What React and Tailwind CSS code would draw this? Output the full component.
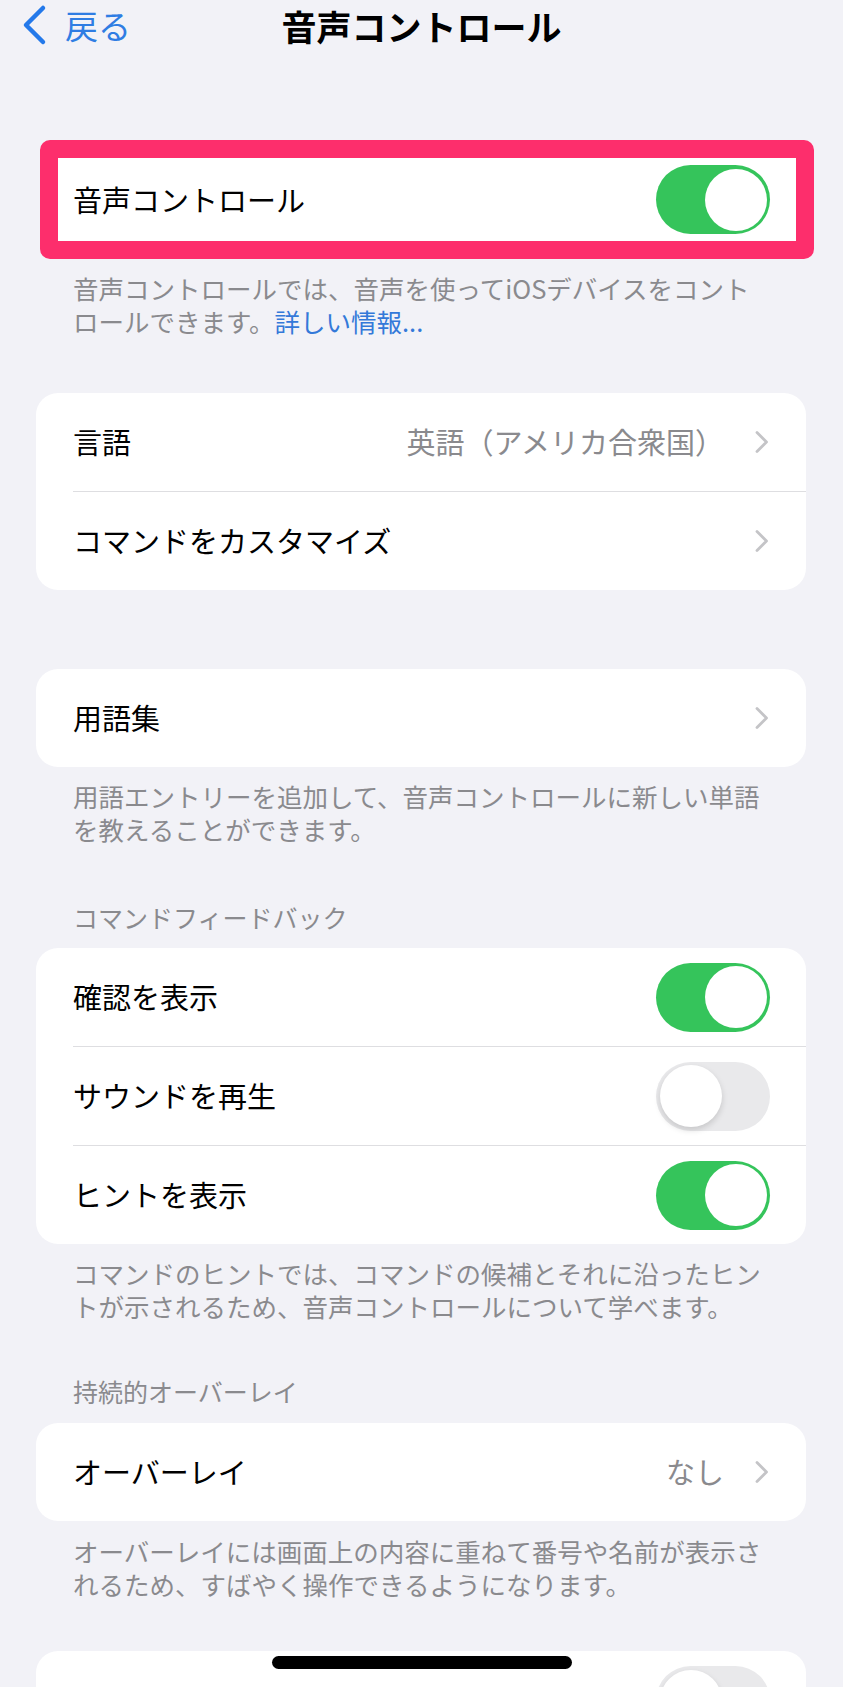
const font = { fontFamily: '"Noto Sans CJK JP", "Noto Sans", sans-serif' };

const Chevron = () => (
  <svg width="16" height="24" viewBox="0 0 16 24" className="shrink-0">
    <path
      d="M3 2.5 L12.5 12 L3 21.5"
      fill="none"
      stroke="#c4c4c7"
      strokeWidth="2.8"
      strokeLinecap="round"
      strokeLinejoin="round"
    />
  </svg>
);

const Toggle = ({ on }) => (
  <div
    className={`relative w-[114px] h-[69px] rounded-full shrink-0 ${
      on ? "bg-[#35c45b]" : "bg-[#e9e9eb]"
    }`}
  >
    <span
      className={`absolute top-[3.5px] w-[62px] h-[62px] rounded-full bg-white ${
        on ? "right-[3.5px]" : "left-[3.5px] shadow-[0_3px_6px_rgba(0,0,0,0.15)]"
      }`}
    ></span>
  </div>
);

const Row = ({ label, value, chevron, toggle, last }) => (
  <div className="pl-[37px]">
    <div
      className={`flex items-center justify-between pr-[36px] ${
        last ? "h-[98px]" : "h-[99px] border-b border-[#dedee1]"
      }`}
    >
      <span className="text-[29px] text-black">{label}</span>
      <div className="flex items-center gap-[30px]">
        {value && <span className="text-[29px] text-[#8a8a8e]">{value}</span>}
        {chevron && <Chevron />}
        {toggle !== undefined && <Toggle on={toggle} />}
      </div>
    </div>
  </div>
);

const Card = ({ className = "", children }) => (
  <div className={`ml-[36px] mr-[37px] bg-white rounded-[22px] overflow-hidden ${className}`}>
    {children}
  </div>
);

const Footer = ({ className = "", children }) => (
  <p className={`ml-[73px] text-[25.5px] leading-[33px] text-[#8a8a8e] whitespace-nowrap ${className}`}>
    {children}
  </p>
);

const SectionTitle = ({ className = "", children }) => (
  <p className={`ml-[73px] text-[25px] leading-[32px] text-[#8a8a8e] ${className}`}>
    {children}
  </p>
);

export default function App() {
  return (
    <div className="relative w-[843px] h-[1687px] overflow-hidden bg-[#f2f2f7]" style={font}>
      {/* header */}
      <div className="relative h-[50px] flex items-center">
        <div className="flex items-center pl-[20px] gap-[17px] text-[#2f7de3]">
          <svg width="28" height="42" viewBox="0 0 28 42">
            <path
              d="M23 4 L6 21 L23 38"
              fill="none"
              stroke="#2479ea"
              strokeWidth="4.5"
              strokeLinecap="round"
              strokeLinejoin="round"
            />
          </svg>
          <span className="text-[33px] leading-none">戻る</span>
        </div>
        <h1 className="absolute left-0 right-0 text-center text-[35px] font-bold text-black leading-none">
          音声コントロール
        </h1>
      </div>

      {/* highlighted voice control */}
      <div className="mt-[90px] ml-[40px] mr-[29px] border-[18px] border-[#fd2e6c] rounded-[10px] bg-white">
        <div className="h-[83px] flex items-center justify-between pl-[15px] pr-[26px]">
          <span className="text-[29px] text-black">音声コントロール</span>
          <Toggle on />
        </div>
      </div>
      <Footer className="mt-[12px]">
        音声コントロールでは、音声を使ってiOSデバイスをコント
        <br />
        ロールできます。<span className="text-[#3479d9]">詳しい情報...</span>
      </Footer>

      <Card className="mt-[56px]">
        <Row label="言語" value="英語（アメリカ合衆国）" chevron />
        <Row label="コマンドをカスタマイズ" chevron last />
      </Card>

      <Card className="mt-[79px]">
        <Row label="用語集" chevron last />
      </Card>
      <Footer className="mt-[12px]">
        用語エントリーを追加して、音声コントロールに新しい単語
        <br />
        を教えることができます。
      </Footer>

      <SectionTitle className="mt-[56px]">コマンドフィードバック</SectionTitle>
      <Card className="mt-[15px]">
        <Row label="確認を表示" toggle={true} />
        <Row label="サウンドを再生" toggle={false} />
        <Row label="ヒントを表示" toggle={true} last />
      </Card>
      <Footer className="mt-[12px]">
        コマンドのヒントでは、コマンドの候補とそれに沿ったヒン
        <br />
        トが示されるため、音声コントロールについて学べます。
      </Footer>

      <SectionTitle className="mt-[53px]">持続的オーバーレイ</SectionTitle>
      <Card className="mt-[16px]">
        <Row label="オーバーレイ" value="なし" chevron last />
      </Card>
      <Footer className="mt-[13px]">
        オーバーレイには画面上の内容に重ねて番号や名前が表示さ
        <br />
        れるため、すばやく操作できるようになります。
      </Footer>

      <Card className="mt-[51px]">
        <div className="pl-[37px] pr-[36px] h-[98px] flex items-start justify-end pt-[15px]">
          <Toggle on={false} />
        </div>
      </Card>

      {/* home indicator */}
      <div className="absolute left-[272px] top-[1656px] w-[300px] h-[13px] rounded-full bg-black"></div>
    </div>
  );
}
